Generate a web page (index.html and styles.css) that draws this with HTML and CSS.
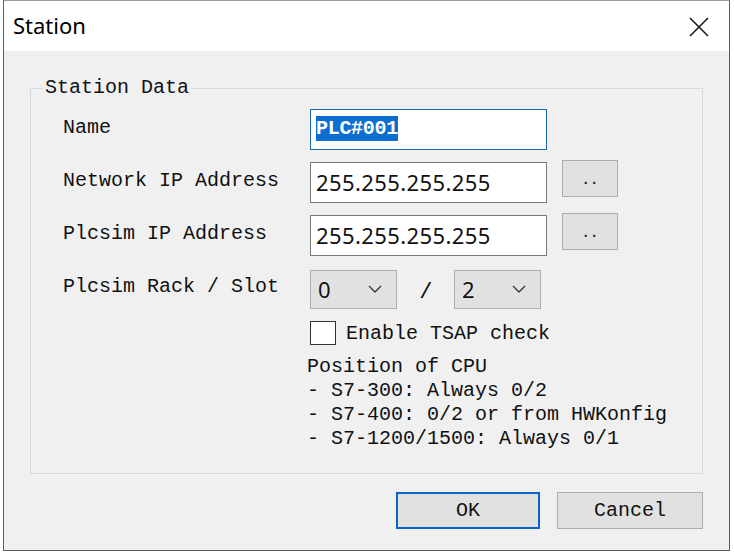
FILE: index.html
```html
<!DOCTYPE html>
<html lang="en">
<head>
    <meta charset="UTF-8">
    <title>Station</title>
    <link rel="stylesheet" href="styles.css">
</head>
<body>
    <div class="window">
        <div class="titlebar">
            <span class="title">Station</span>
            <svg class="close" width="20" height="20" viewBox="0 0 20 20">
                <path d="M1 1 L19 19 M19 1 L1 19" stroke="#1a1a1a" stroke-width="1.6" fill="none"/>
            </svg>
        </div>

        <fieldset class="group">
            <legend>Station Data</legend>
            <div class="form">
                <label class="lbl">Name</label>
                <div class="field focused"><span class="sel">PLC#001</span></div>
                <div></div>

                <label class="lbl">Network IP Address</label>
                <div class="field">255.255.255.255</div>
                <button class="more">..</button>

                <label class="lbl">Plcsim IP Address</label>
                <div class="field">255.255.255.255</div>
                <button class="more">..</button>

                <label class="lbl">Plcsim Rack / Slot</label>
                <div class="rack">
                    <div class="combo"><span>0</span>
                        <svg width="14" height="8" viewBox="0 0 14 8"><path d="M1 1 L7 7 L13 1" stroke="#333" stroke-width="1.3" fill="none"/></svg>
                    </div>
                    <span class="slash">/</span>
                    <div class="combo"><span>2</span>
                        <svg width="14" height="8" viewBox="0 0 14 8"><path d="M1 1 L7 7 L13 1" stroke="#333" stroke-width="1.3" fill="none"/></svg>
                    </div>
                </div>
                <div></div>

                <div></div>
                <div class="check"><span class="box"></span>Enable TSAP check</div>
                <div></div>

                <div></div>
                <div class="info">Position of CPU
- S7-300: Always 0/2
- S7-400: 0/2 or from HWKonfig
- S7-1200/1500: Always 0/1</div>
            </div>
        </fieldset>

        <div class="actions">
            <button class="btn default">OK</button>
            <button class="btn">Cancel</button>
        </div>
    </div>
</body>
</html>
```

FILE: styles.css
```css
body {
    margin: 0;
    background: #ffffff;
    font-family: "Liberation Mono", monospace;
    font-size: 20px;
    color: #111;
}
.window {
    box-sizing: border-box;
    width: 727px;
    height: 551px;
    margin-left: 3px;
    background: #f0f0f0;
    border: 1px solid #5c5c5c;
    border-top-color: #9a9a9a;
}
.titlebar {
    height: 50px;
    background: #ffffff;
    display: flex;
    align-items: center;
    justify-content: space-between;
    padding: 0 20px 0 9px;
}
.title {
    font-family: "Noto Sans", sans-serif;
    font-size: 22px;
    color: #000;
    margin-top: -2px;
}
.close {
    margin-top: 2px;
}
.group {
    margin: 25px 26px 0 26px;
    padding: 0 0 22px 32px;
    border: 1px solid #d9d9d9;
    min-width: 0;
}
.group legend {
    margin-left: -20px;
    padding: 0 2px;
    line-height: 24px;
}
.form {
    display: grid;
    grid-template-columns: 232px 237px 56px;
    column-gap: 15px;
    align-items: center;
    margin-top: 9px;
}
.lbl {
    height: 41px;
    line-height: 38px;
    margin-bottom: 12px;
}
.field {
    box-sizing: border-box;
    height: 41px;
    margin-bottom: 12px;
    background: #ffffff;
    border: 1px solid #7a7a7a;
    padding-left: 5px;
    font-family: "Noto Sans", sans-serif;
    font-size: 22px;
    line-height: 38px;
    letter-spacing: 0.4px;
    color: #111;
}
.field.focused {
    border-color: #1c64b4;
    font-family: "Liberation Mono", monospace;
    font-size: 20px;
    letter-spacing: -0.3px;
}
.sel {
    background: #0a6fd1;
    color: #ffffff;
    font-weight: bold;
    padding: 1px 0;
}
.more {
    box-sizing: border-box;
    height: 37px;
    margin-bottom: 14px;
    margin-top: -6px;
    background: #e1e1e1;
    border: 1px solid #adadad;
    color: #222;
    font-family: "Liberation Mono", monospace;
    font-size: 14px;
    font-weight: bold;
    padding-top: 4px;
}
.rack {
    display: flex;
    align-items: center;
    margin-bottom: 11px;
}
.combo {
    box-sizing: border-box;
    width: 87px;
    height: 39px;
    display: flex;
    align-items: center;
    justify-content: space-between;
    padding: 0 14px 0 7px;
    background: #e1e1e1;
    border: 1px solid #adadad;
    font-family: "Noto Sans", sans-serif;
    font-size: 22px;
    color: #111;
}
.slash {
    width: 57px;
    text-align: center;
    font-family: "Noto Sans", sans-serif;
    font-size: 22px;
    font-style: italic;
}
.check {
    grid-column: 2 / 4;
    display: flex;
    align-items: center;
    gap: 10px;
    height: 24px;
}
.box {
    box-sizing: border-box;
    width: 26px;
    height: 24px;
    background: #ffffff;
    border: 1px solid #333;
}
.info {
    grid-column: 2 / 4;
    white-space: pre;
    line-height: 24px;
    margin: 10px 0 0 -3px;
}
.actions {
    display: flex;
    justify-content: flex-end;
    gap: 17px;
    margin: 18px 26px 0 0;
}
.btn {
    box-sizing: border-box;
    width: 146px;
    height: 37px;
    background: #e1e1e1;
    border: 1px solid #adadad;
    font-family: "Liberation Mono", monospace;
    font-size: 20px;
    color: #111;
}
.btn.default {
    width: 144px;
    border: 2px solid #0a64c8;
}
```
